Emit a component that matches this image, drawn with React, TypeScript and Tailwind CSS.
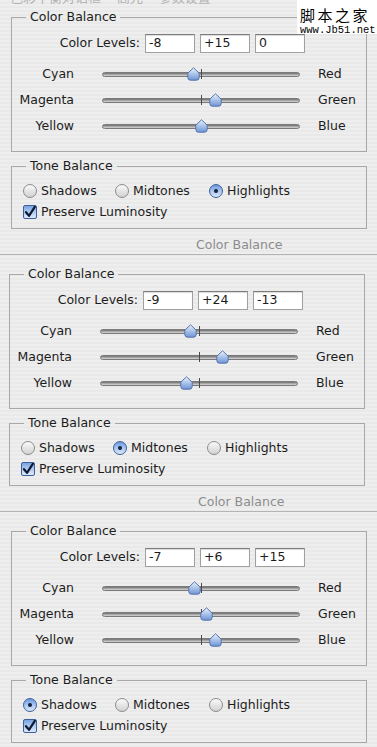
import React from "react";

type Tone = "Shadows" | "Midtones" | "Highlights";

interface SectionData {
  levels: [number, number, number];
  tone: Tone;
  shifted?: boolean;
}

const sections: SectionData[] = [
  { levels: [-8, 15, 0], tone: "Highlights" },
  { levels: [-9, 24, -13], tone: "Midtones", shifted: true },
  { levels: [-7, 6, 15], tone: "Shadows" },
];

const pairs: [string, string][] = [
  ["Cyan", "Red"],
  ["Magenta", "Green"],
  ["Yellow", "Blue"],
];

const fmt = (v: number) => (v > 0 ? `+${v}` : `${v}`);

function Thumb({ value }: { value: number }) {
  const left = 99 + value * 0.99 - 6.5;
  return (
    <svg
      width="13"
      height="14"
      viewBox="0 0 13 14"
      className="absolute top-0"
      style={{ left }}
    >
      <defs>
        <linearGradient id="thumbGrad" x1="0" y1="0" x2="0" y2="1">
          <stop offset="0" stopColor="#eef3fb" />
          <stop offset="0.5" stopColor="#aac3ea" />
          <stop offset="1" stopColor="#6f95d4" />
        </linearGradient>
      </defs>
      <path
        d="M6.5 0.8 L12.2 6.2 V10.4 Q12.2 13.2 9.4 13.2 H3.6 Q0.8 13.2 0.8 10.4 V6.2 Z"
        fill="url(#thumbGrad)"
        stroke="#5473aa"
        strokeWidth="1"
      />
    </svg>
  );
}

function SliderRow({ left, right, value }: { left: string; right: string; value: number }) {
  return (
    <div className="flex h-[26px] items-center">
      <span className="w-[62px] text-right">{left}</span>
      <div className="relative ml-[28px] flex h-[14px] w-[198px] items-center">
        <div className="h-[5px] w-full rounded-full border border-[#7a7a7a] bg-linear-to-b from-[#6e6e6e] via-[#a6a6a6] to-[#d8d8d8]" />
        <div className="absolute left-[99px] top-[2px] h-[10px] w-px bg-[#4a4a4a]" />
        <Thumb value={value} />
      </div>
      <span className="ml-[18px]">{right}</span>
    </div>
  );
}

function Radio({ label, on, width }: { label: string; on: boolean; width: string }) {
  return (
    <div className={`flex items-center gap-[4px] ${width}`}>
      {on ? (
        <span className="flex h-[14px] w-[14px] items-center justify-center rounded-full border border-[#3d5f99] bg-linear-to-b from-[#6a98de] via-[#a9c6ef] to-[#dbe8fb]">
          <span className="h-[4px] w-[4px] rounded-full bg-[#13233f]" />
        </span>
      ) : (
        <span className="h-[14px] w-[14px] rounded-full border border-[#8c8c8c] bg-linear-to-b from-[#fafafa] to-[#d2d2d2]" />
      )}
      <span>{label}</span>
    </div>
  );
}

function Section({ data, first, last }: { data: SectionData; first: boolean; last: boolean }) {
  const ml = data.shifted ? "ml-[9px]" : "ml-[11px]";
  return (
    <div>
      <fieldset
        className={`${ml} ${first ? "mt-[3px]" : "mt-[11px]"} w-[356px] border border-[#a8a8a8] pb-[12px]`}
      >
        <legend className="ml-[14px] px-[4px] leading-[16px]">Color Balance</legend>
        <div className="mt-[9px] flex items-center gap-[5px]">
          <span className="w-[128px] text-right">Color Levels:</span>
          {data.levels.map((v, i) => (
            <div
              key={i}
              className="flex h-[19px] w-[50px] items-center border border-[#a0a0a0] border-t-[#7c7c7c] bg-white pl-[3px] shadow-[inset_0_1px_1px_rgba(0,0,0,0.15)]"
            >
              {fmt(v)}
            </div>
          ))}
        </div>
        <div className="mt-[8px]">
          {pairs.map(([l, r], i) => (
            <SliderRow key={l} left={l} right={r} value={data.levels[i]} />
          ))}
        </div>
      </fieldset>

      <fieldset className={`${ml} mt-[6px] w-[356px] border border-[#a8a8a8] pb-[7px]`}>
        <legend className="ml-[14px] px-[4px] leading-[16px]">Tone Balance</legend>
        <div className="mt-[8px] flex h-[18px] items-center pl-[11px]">
          <Radio label="Shadows" on={data.tone === "Shadows"} width="w-[92px]" />
          <Radio label="Midtones" on={data.tone === "Midtones"} width="w-[94px]" />
          <Radio label="Highlights" on={data.tone === "Highlights"} width="w-[100px]" />
        </div>
        <div className="mt-[3px] flex h-[18px] items-center gap-[4px] pl-[11px]">
          <span className="flex h-[14px] w-[14px] items-center justify-center rounded-[2px] border border-[#3d5f99] bg-linear-to-b from-[#7aa3e2] via-[#b1cbf0] to-[#dde9fb]">
            <svg width="12" height="12" viewBox="0 0 12 12">
              <path
                d="M2 6.2 L5 9.8 L10.8 0.8"
                fill="none"
                stroke="#0e1a33"
                strokeWidth="2.2"
                strokeLinecap="round"
                strokeLinejoin="round"
              />
            </svg>
          </span>
          <span>Preserve Luminosity</span>
        </div>
      </fieldset>

      {!last && (
        <div
          className={`h-[26px] border-b border-[#b4b4b4] pt-[8px] leading-[16px] text-[#8c8c8c] ${
            data.shifted ? "pl-[198px]" : "pl-[196px]"
          }`}
        >
          Color Balance
        </div>
      )}
    </div>
  );
}

export default function App() {
  return (
    <div className="relative h-[747px] w-[377px] overflow-hidden bg-[repeating-linear-gradient(180deg,#eeeeee_0px,#eeeeee_2px,#e9e9e9_2px,#e9e9e9_4px)] font-['DejaVu_Sans',sans-serif] text-[12.5px] text-[#1c1c1c]">
      <div className="h-[6px] overflow-hidden">
        <div className="-mt-[10px] pl-[10px] font-['Noto_Sans_CJK_SC',sans-serif] text-[13px] leading-[14px] text-[#b2b2b2]">
          色彩平衡对话框 “高光” 参数设置
        </div>
      </div>

      {sections.map((s, i) => (
        <Section key={i} data={s} first={i === 0} last={i === sections.length - 1} />
      ))}

      <div className="absolute right-0 top-0 flex h-[34px] w-[80px] flex-col bg-white pl-[3px] pt-[6px]">
        <div className="whitespace-nowrap font-['Noto_Sans_CJK_SC',sans-serif] text-[15px] leading-[17px] tracking-[2.5px] text-black">
          脚本之家
        </div>
        <div className="mt-[2px] whitespace-nowrap font-['Liberation_Mono',monospace] text-[10.5px] leading-[11px] text-black">
          www.Jb51.net
        </div>
      </div>
    </div>
  );
}
